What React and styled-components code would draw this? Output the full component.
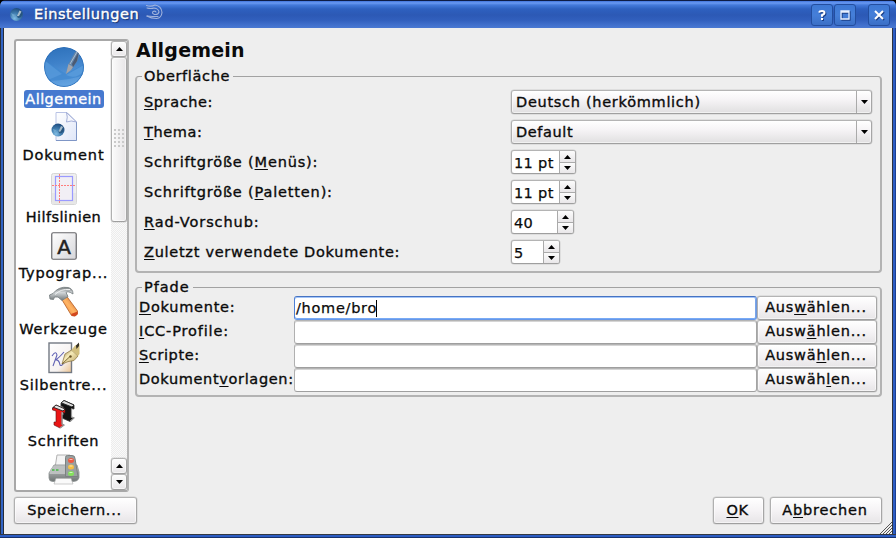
import React from "react";
import styled, { createGlobalStyle, css } from "styled-components";

const Global = createGlobalStyle`
  *, *::before, *::after { box-sizing: border-box; }
  html, body { margin: 0; background: #000; }
  body {
    font-family: "DejaVu Sans", sans-serif;
    font-size: 14.5px;
    line-height: 18px;
    color: #0a0a0a;
    overflow: hidden;
  }
`;

const bevel = css`
  border: 1px solid #a9a9a9;
  border-color: #b4b4b4 #a6a6a6 #9f9f9f #b0b0b0;
  border-radius: 3px;
  box-shadow: inset 0 0 0 1px rgba(255, 255, 255, 0.55), 0 0 0 0.5px rgba(160, 160, 160, 0.4);
`;

const inkWeight = css`
  -webkit-text-stroke: 0.35px currentColor;
`;

const Window = styled.div`
  width: 896px;
  height: 538px;
  display: flex;
  flex-direction: column;
  background: linear-gradient(90deg, #2b2f38 0 1px, #3164c4 1px 3px, #252b38 3px 4px, #2b3038 4px 892px, #30343c 892px 893px, #2c5dc4 893px 895px, #1c3f93 895px);
  border-radius: 6px 6px 0 0;
  overflow: hidden;
`;

const TitleBar = styled.header`
  height: 28px;
  flex: none;
  display: flex;
  align-items: center;
  padding: 1px 6px 0 10px;
  background: linear-gradient(#0d1c45 0 1px, #4074dc 1px, #6a9af2 3px, #447adb 5px, #2e60bf 9px, #2c59b5 15px, #315fbd 20px, #4473cf 26px, #4a78d2 28px);
`;

const Title = styled.h1`
  margin: 0 7px 0 11px;
  padding-bottom: 1px;
  font-size: 14.5px;
  line-height: 20px;
  font-weight: 400;
  color: #fff;
  letter-spacing: 0.53px;
  -webkit-text-stroke: 0.4px #fff;
  text-shadow: 1px 1px 1px #10295f;
`;

const WindowButtons = styled.div`
  display: flex;
  gap: 1px;
  margin-left: auto;
`;

const WindowButton = styled.button`
  width: 22px;
  height: 22px;
  padding: 0;
  margin-left: ${(p) => (p.$apart ? "11px" : 0)};
  display: grid;
  place-items: center;
  border: 1px solid #234e9f;
  border-radius: 3px;
  background: linear-gradient(#3e79d5, #457fd9 50%, #3b6fc6);
  svg { filter: drop-shadow(1px 1px 0 #1b3f86); }
`;

const Body = styled.main`
  width: 888px;
  height: 506px;
  margin-left: 4px;
  padding: 11px 10px 0;
  background: #eeeeee;
  position: relative;
`;

const BottomEdge = styled.div`
  height: 4px;
  background: linear-gradient(#333842 0 1px, #2b5cc2 1px 3px, #17316d 3px);
`;

const Columns = styled.div`
  display: flex;
  gap: 6px;
  height: 453px;
`;

const ListFrame = styled.div`
  width: 115px;
  display: flex;
  border: 2px solid #a8a8a8;
  border-right-color: #b4b4b4;
  border-radius: 3px;
  background: #fff;
`;

const IconList = styled.ul`
  list-style: none;
  margin: 0;
  padding: 4px 0 0;
  width: 95px;
  height: 449px;
  overflow: hidden;
`;

const Item = styled.li`
  height: ${(p) => p.$h}px;
  display: flex;
  flex-direction: column;
  align-items: center;
  justify-content: space-between;
`;

const IconSlot = styled.div`
  height: ${(p) => p.$h}px;
  margin-top: ${(p) => p.$top}px;
  svg { display: block; }
`;

const ItemLabel = styled.span`
  height: 18px;
  line-height: 18px;
  white-space: nowrap;
  letter-spacing: ${(p) => p.$track}px;
  border-radius: 3px;
  ${inkWeight}
  ${(p) =>
    p.$selected &&
    css`
      width: 80px;
      text-align: center;
      color: #fff;
      background: #4679cf;
    `}
`;

const ScrollBar = styled.div`
  width: 16px;
  display: flex;
  flex-direction: column;
  background: repeating-conic-gradient(#ececec 0 25%, #fafafa 0 50%) 0 0 / 2px 2px;
`;

const ScrollButton = styled.button`
  ${bevel}
  width: 16px;
  height: 16px;
  padding: 0;
  display: grid;
  place-items: center;
  flex: none;
  background: linear-gradient(#fdfdfd, #e9e7e9);
  svg { display: block; }
`;

const Thumb = styled.div`
  ${bevel}
  height: 165px;
  margin-bottom: auto;
  display: grid;
  place-items: center;
  background: linear-gradient(90deg, #fbfbfb, #e8e6e8);
`;

const Grip = styled.div`
  width: 11px;
  height: 18px;
  margin-top: -4px;
  background: radial-gradient(circle at 1px 1px, #cacaca 1px, transparent 1.2px) 0 0 / 4px 4px;
`;

const Panel = styled.section`
  width: 747px;
`;

const Heading = styled.h2`
  margin: 0;
  height: 37px;
  font-size: 19px;
  line-height: 22px;
  letter-spacing: 0.2px;
  padding-left: 1px;
`;

const Group = styled.fieldset`
  margin: 0 0 ${(p) => p.$after}px;
  height: ${(p) => p.$h}px;
  min-width: 0;
  padding: 0 ${(p) => p.$pad}px;
  border: 2px solid #b3b3b3;
  border-color: #a2a2a2 #b3b3b3 #b3b3b3 #b3b3b3;
  border-width: 1px 2px 2px;
  border-radius: 4px;
`;

const Legend = styled.legend`
  height: 1px;
  line-height: 1px;
  margin-left: ${(p) => p.$x}px;
  padding: 0 3px 0 2px;
  letter-spacing: ${(p) => p.$track}px;
  ${inkWeight}
`;

const FieldRows = styled.div`
  padding-top: ${(p) => p.$top}px;
  display: flex;
  flex-direction: column;
  gap: ${(p) => p.$gap}px;
`;

const FieldRow = styled.div`
  display: grid;
  grid-template-columns: ${(p) => p.$cols};
  height: 24px;
  align-items: center;
`;

const Label = styled.label`
  white-space: nowrap;
  padding-bottom: ${(p) => p.$lift || 0}px;
  letter-spacing: ${(p) => p.$track}px;
  ${inkWeight}
`;

const Key = styled.span`
  text-decoration: underline;
  text-decoration-thickness: 1px;
  text-underline-offset: 2px;
  text-decoration-skip-ink: none;
`;

const Select = styled.div`
  ${bevel}
  height: 24px;
  width: 361px;
  display: flex;
  align-items: center;
  padding-left: 4px;
  background: linear-gradient(#ffffff, #f6f4f6 40%, #e0dfe0);
  letter-spacing: ${(p) => p.$track}px;
  ${inkWeight}
`;

const SelectArrow = styled.span`
  margin-left: auto;
  width: 15px;
  height: 22px;
  display: grid;
  place-items: center;
  border-left: 1px solid #aaa;
`;

const Spin = styled.div`
  ${bevel}
  width: ${(p) => p.$w}px;
  height: 24px;
  display: flex;
  background: #fff;
  overflow: hidden;
`;

const SpinValue = styled.span`
  flex: 1;
  padding-left: 2px;
  line-height: 24px;
  white-space: nowrap;
  letter-spacing: ${(p) => p.$track}px;
  -webkit-text-stroke: 0.25px currentColor;
`;

const SpinButtons = styled.div`
  width: 16px;
  flex: none;
  display: grid;
  grid-template-rows: 11px 11px;
  border-left: 1px solid #aaa;
`;

const SpinButton = styled.span`
  display: grid;
  place-items: center;
  background: linear-gradient(#fcfcfc, #e9e7e9);
  & + & { border-top: 1px solid #aaa; }
`;

const PathInput = styled.div`
  ${bevel}
  height: 24px;
  width: 463px;
  display: flex;
  align-items: center;
  padding-left: 1px;
  background: #fff;
  box-shadow: inset 0 1px 0 #d5d5d5;
  letter-spacing: 0.72px;
  -webkit-text-stroke: 0.25px currentColor;
  ${(p) =>
    p.$focused &&
    css`
      border-color: #4673c2 #6697e8 #6697e8 #4e80d5;
      box-shadow: inset 0 1px 0 #a5c6f8, inset 0 -1px 0 #78aaf5, inset -1px 0 0 #78a5ea;
    `}
`;

const Caret = styled.i`
  width: 1px;
  height: 17px;
  margin-left: -1px;
  background: #000;
`;

const PushButton = styled.button`
  ${bevel}
  height: ${(p) => p.$h}px;
  width: ${(p) => p.$w}px;
  padding: 0 2px ${(p) => p.$lift || 0}px 0;
  font: inherit;
  color: inherit;
  text-align: center;
  background: linear-gradient(#ffffff, #f5f3f5 50%, #e7e5e7);
  letter-spacing: ${(p) => p.$track}px;
  ${inkWeight}
`;

const Actions = styled.footer`
  display: flex;
  gap: 6px;
  padding-top: 5px;
`;

const Spacer = styled.div`
  flex: 1;
`;

const SizeGrip = styled.svg`
  position: absolute;
  right: 0;
  bottom: 0;
`;

const Arrow = ({ up }) => (
  <svg width="7" height="4" viewBox="0 0 7 4">
    <path d={up ? "M0 4 L3.5 0 L7 4Z" : "M0 0 L7 0 L3.5 4Z"} fill="#000" />
  </svg>
);

const Globe = ({ id, size }) => (
  <svg width={size} height={size} viewBox="0 0 40 40">
    <defs>
      <linearGradient id={`${id}g`} x1="0" y1="0" x2="0.15" y2="1">
        <stop offset="0" stopColor="#2c70ba" />
        <stop offset="0.45" stopColor="#3f82ca" />
        <stop offset="1" stopColor="#62a2e0" />
      </linearGradient>
      <clipPath id={`${id}c`}><circle cx="20" cy="20" r="20" /></clipPath>
    </defs>
    <g clipPath={`url(#${id}c)`}>
      <circle cx="20" cy="20" r="20" fill={`url(#${id}g)`} />
      <path d="M0 13 L22 27 L40 17 V28 Q28 33 4 34Z" fill="#4188cf" opacity=".8" />
      <path d="M0 13 L18 27 L4 33 Q0 26 0 13Z" fill="#5e9fde" opacity=".6" />
      <path d="M22 28 L40 18 V24 Q32 33 22 28Z" fill="#68a8e4" opacity=".5" />
      <circle cx="20" cy="20" r="19.500" fill="none" stroke="#2b6cb5" opacity=".7" />
      <path d="M22 27 L24.500 17 L31 5 L36 3 L34 13 L28 22Z" fill="#6485a9" />
      <path d="M22 27 L24.500 17 L29 20 L27 23Z" fill="#a3a5ab" />
      <path d="M28 17 L35 4 L33 14 L29 20Z" fill="#4b5a72" />
      <path d="M26 17 L33 5" stroke="#a9bdd0" strokeWidth="1" />
    </g>
  </svg>
);

const SmallGlobe = ({ x = 0, y = 0, id }) => (
  <g transform={`translate(${x} ${y})`}>
    <defs>
      <radialGradient id={id} cx=".35" cy=".8" r=".8">
        <stop offset="0" stopColor="#82bde4" />
        <stop offset=".5" stopColor="#3f7cae" />
        <stop offset="1" stopColor="#1f4d80" />
      </radialGradient>
    </defs>
    <circle cx="6.5" cy="6.5" r="6.5" fill={`url(#${id})`} />
    <path d="M6 7 L8 8.500 L12 4 V7 Q11 10 8 10Z" fill="#245078" opacity=".8" />
    <path d="M7 8 L9.500 2.500 L11.500 3.500 L9 8Z" fill="#a9bcc8" />
    <path d="M1 5 L5 7 L3 9Z" fill="#80b6d9" opacity=".6" />
  </g>
);

const DocumentIcon = () => (
  <svg width="32" height="32" viewBox="0 0 32 32">
    <defs>
      <linearGradient id="sheet" x1="0" y1="0" x2="1" y2="1">
        <stop offset="0" stopColor="#fff" /><stop offset="1" stopColor="#dfe6f8" />
      </linearGradient>
    </defs>
    <path d="M8 1.500 H19 L28.500 11 V29.500 H8Z" fill="url(#sheet)" stroke="#b9c3e5" />
    <path d="M8 29.500 H28.500 V11" fill="none" stroke="#7f96c6" />
    <path d="M18.500 1.500 Q20 6 18.500 11 Q23 9 28.500 11Z" fill="#f5f6fc" stroke="#9aa6d2" strokeWidth=".9" />
    <SmallGlobe x={3.500} y={12.500} id="docglobe" />
  </svg>
);

const GuidesIcon = () => (
  <svg width="26" height="32" viewBox="0 0 26 32">
    <rect x=".5" y=".5" width="25" height="31" rx="2" fill="#efefef" stroke="#d6d6d6" />
    <rect x="1" y="20" width="24" height="11" fill="#e7e7e7" />
    <rect x="4.500" y="3.500" width="17" height="24" fill="#f1eff5" stroke="#9a9aff" strokeWidth="1.200" />
    <path d="M8.500 1 V31 M1 12.500 H25" stroke="#ff7d7d" strokeDasharray="2 1" />
  </svg>
);

const TypographyIcon = () => (
  <svg width="26" height="28" viewBox="0 0 26 28">
    <defs>
      <linearGradient id="keycap" x1="0" y1="0" x2="1" y2="1">
        <stop offset="0" stopColor="#fff" /><stop offset="1" stopColor="#d6d6da" />
      </linearGradient>
    </defs>
    <rect x=".75" y=".75" width="24.500" height="26.500" rx="1.500" fill="url(#keycap)" stroke="#66666a" strokeWidth="1.200" />
    <text x="13" y="21.500" textAnchor="middle" fontFamily="DejaVu Sans" fontSize="20" letterSpacing="0" fill="#222" stroke="#222" strokeWidth=".5">A</text>
  </svg>
);

const HammerIcon = () => (
  <svg width="32" height="32" viewBox="0 0 32 32">
    <defs>
      <linearGradient id="handle" x1="1" y1="0" x2="0" y2="1">
        <stop offset="0" stopColor="#c2561c" /><stop offset=".5" stopColor="#ffb565" /><stop offset="1" stopColor="#e8762c" />
      </linearGradient>
      <linearGradient id="steel" x1="0" y1="0" x2="0" y2="1">
        <stop offset="0" stopColor="#777d80" /><stop offset=".4" stopColor="#d2d6d8" /><stop offset="1" stopColor="#70777a" />
      </linearGradient>
    </defs>
    <path d="M13.500 13 L18.500 10 L29.500 25 L29.500 28 L27 30 L23.500 29.500Z" fill="url(#handle)" stroke="#b25a22" strokeWidth=".8" />
    <path d="M23 28 L29.500 25.500 L29.500 28.500 L27 30.200 L24 30Z" fill="#d4481e" />
    <path d="M2 13 L1.500 9 L5 7.500 Q11 0 20 1.500 Q25 2.500 25 8 Q20 4.500 18 6.500 L20 10.500 L14 14.500 L10 11 L6.500 11 L5.500 13.500Z" fill="url(#steel)" stroke="#7b8285" strokeWidth=".9" />
    <path d="M7 8.500 Q13 2.500 22 3.500" fill="none" stroke="#eef0f1" />
  </svg>
);

const HyphenIcon = () => (
  <svg width="32" height="32" viewBox="0 0 32 32">
    <defs>
      <linearGradient id="card" x1="0" y1="0" x2="1" y2="1">
        <stop offset="0" stopColor="#fff" /><stop offset=".65" stopColor="#f6f2f1" /><stop offset="1" stopColor="#ecc28c" />
      </linearGradient>
      <linearGradient id="nib" x1="0" y1="0" x2="1" y2="1">
        <stop offset="0" stopColor="#8d7742" /><stop offset=".4" stopColor="#f6ebb9" /><stop offset="1" stopColor="#b69d5c" />
      </linearGradient>
    </defs>
    <rect x="1" y="1" width="22.500" height="29.500" fill="url(#card)" stroke="#737983" strokeWidth="1.400" />
    <path d="M4 14 Q8 8 9 13 L5 24 M16 10 Q10 17 7 18 Q11 17 12 23 Q13 25 17 20" fill="none" stroke="#6263b4" strokeWidth="1.100" />
    <path d="M14 22 L17 12 L23.500 8 L30 14 L26 18.500 Q20 19 14 22Z" fill="url(#nib)" stroke="#8f7a46" strokeWidth=".8" />
    <path d="M23.500 8 L27 3.500 L31.500 2 V12 L30 14Z" fill="#d2bf7e" />
    <path d="M28 3.500 L31 .5 V4 L28.500 7Z" fill="#342f22" />
    <path d="M14 22 L22 14.500" stroke="#7e6935" />
    <circle cx="22.500" cy="14.500" r="1.200" fill="#675224" />
  </svg>
);

const FontsIcon = () => (
  <svg width="26" height="30" viewBox="0 0 26 30">
    <path d="M10 4 L13 1.500 L23 6 V10 L20.500 9.500 V18 L23 19 L19 22.500 L11 19 V16 L12.500 16 V8 L10 7Z" fill="#111" stroke="#333" strokeWidth=".8" />
    <path d="M10 4 L13 1.500 L23 6 L21 8 L12 4.500Z" fill="#dcdcdc" stroke="#222" strokeWidth=".9" />
    <path d="M20.500 9.500 V18 L23 19 L19 22.500" fill="none" stroke="#999" strokeWidth="1.200" />
    <path d="M1.500 9 L5 6 L14 10 V14 L11 13 V25 L13 26 L9 29 L3 26 V23 L5 23 V12 L1.500 11Z" fill="#ea1515" stroke="#5c1010" strokeWidth=".6" />
    <path d="M1.500 9 L5 6 L14 10 L12 12 L3 8.500Z" fill="#e6e6e6" stroke="#222" strokeWidth=".9" />
    <path d="M11 13 V25 L13 26 L9 29" fill="none" stroke="#999" strokeWidth="1.300" />
  </svg>
);

const PrinterIcon = () => (
  <svg width="32" height="31" viewBox="0 0 32 31">
    <defs>
      <linearGradient id="printer" x1="0" y1="0" x2="0" y2="1">
        <stop offset="0" stopColor="#cfd1d1" /><stop offset=".5" stopColor="#9b9f9f" /><stop offset="1" stopColor="#6e7474" />
      </linearGradient>
    </defs>
    <path d="M9 1 H22 V14 H7Z" fill="#f4f4f4" stroke="#b2b2b2" />
    <path d="M6 11 H29 L31 18 V24 Q30 27.500 25 27.500 H5 Q1 27.500 1 24 L1 19Z" fill="url(#printer)" stroke="#8c9090" strokeWidth=".8" />
    <path d="M1.500 20 Q2 13 7 12 H17 V20Z" fill="#bdc0c0" />
    <path d="M8 24.500 H23 L25 30 H6Z" fill="#fafafa" stroke="#b8b8b8" strokeWidth=".7" />
    <path d="M4 16 H6.500 M8 16 H10.500" stroke="#42b942" strokeWidth="1.500" />
    <path d="M17.500 3.500 Q17.500 1.500 19.500 1.500 H24 Q27 1.500 27 4.500 L30 22.500 H17.500Z" fill="#9aa0a0" stroke="#7b8181" />
    <ellipse cx="23" cy="6.500" rx="3" ry="2.500" fill="#f0593f" />
    <ellipse cx="23" cy="13" rx="3" ry="2.500" fill="#f5bf40" />
    <ellipse cx="23" cy="19.500" rx="3" ry="2.500" fill="#84e25c" />
    <path d="M21.500 5.500 H24.500 M21.500 12 H24.500 M21.500 18.500 H24.500" stroke="#fff" strokeOpacity=".6" />
  </svg>
);

const Swirl = styled.svg`
  margin-bottom: 5px;
`;

const TitleSwirl = () => (
  <Swirl width="18" height="17" viewBox="0 0 18 17" fill="none" stroke="#9fb2dc" strokeWidth="1.100" strokeLinecap="round">
    <path d="M.5 1.500 Q5 3 9 1 Q15.500 2 16 8.500 Q15.500 14 10.500 14.500 Q5 14.500 1 12" />
    <path d="M1 4 Q5 5 8 4 Q12.500 4.500 13 8 Q12 11 8.500 10.500 Q5.500 9.500 7 7.500 Q9 6.500 10 8" />
    <path d="M1 12 Q7 12.500 12 12.500" />
  </Swirl>
);

const items = [
  { name: "Allgemein", h: 63, icon: <Globe id="big" size={40} />, ih: 40, top: 2, track: 0.45, selected: true },
  { name: "Dokument", h: 56, icon: <DocumentIcon />, ih: 32, top: 3, track: 0.85 },
  { name: "Hilfslinien", h: 62, icon: <GuidesIcon />, ih: 32, top: 9, track: 0.4 },
  { name: "Typograp...", h: 56, icon: <TypographyIcon />, ih: 28, top: 6, track: 0.85 },
  { name: "Werkzeuge", h: 56, icon: <HammerIcon />, ih: 32, top: 4, track: 0.9 },
  { name: "Silbentre...", h: 56, icon: <HyphenIcon />, ih: 32, top: 4, track: 0.75 },
  { name: "Schriften", h: 56, icon: <FontsIcon />, ih: 30, top: 5, track: 0.7 },
  { name: "", h: 56, icon: <PrinterIcon />, ih: 31, top: 4, track: 0.3 },
];

/* Renders a caption whose accelerator key follows an ampersand. */
const Caption = ({ text }) => {
  const i = text.indexOf("&");
  if (i < 0) return text;
  return (
    <>
      {text.slice(0, i)}
      <Key>{text[i + 1]}</Key>
      {text.slice(i + 2)}
    </>
  );
};

const selects = [
  { label: "&Sprache:", value: "Deutsch (herkömmlich)", track: 0.6, vt: 0.71 },
  { label: "&Thema:", value: "Default", track: 0.6, vt: 0.6 },
];

const spins = [
  { label: "Schriftgröße (&Menüs):", value: "11 pt", w: 65, track: 0.83, vt: 0.35 },
  { label: "Schriftgröße (&Paletten):", value: "11 pt", w: 65, track: 0.83, vt: 0.35 },
  { label: "&Rad-Vorschub:", value: "40", w: 63, track: 0.9, vt: 0.2 },
  { label: "&Zuletzt verwendete Dokumente:", value: "5", w: 49, track: 0.72, vt: 0.2 },
];

const paths = [
  { label: "&Dokumente:", value: "/home/bro", button: "Aus&wählen...", track: 0.75 },
  { label: "&ICC-Profile:", button: "Ausw&ählen...", track: 0.85 },
  { label: "&Scripte:", button: "Auswä&hlen...", track: 0.6 },
  { label: "Dokument&vorlagen:", button: "Auswäh&len...", track: 0.65 },
];

export default function App() {
  return (
    <>
      <Global />
      <Window>
        <TitleBar>
          <svg width="13" height="13" viewBox="0 0 13 13"><SmallGlobe id="titleglobe" /></svg>
          <Title>Einstellungen</Title>
          <TitleSwirl />
          <WindowButtons>
            <WindowButton aria-label="Hilfe">
              <svg width="8" height="10" viewBox="0 0 8 10" fill="none" stroke="#fff" strokeWidth="2">
                <path d="M1 2.500 Q1.500 1 4 1 Q6.500 1 6.500 3 Q6.500 4.300 4 5.200 V6.800 M4 8 V10" />
              </svg>
            </WindowButton>
            <WindowButton aria-label="Maximieren">
              <svg width="10" height="10" viewBox="0 0 10 10" fill="none" stroke="#e8f0ff" strokeWidth="1.300">
                <path d="M1 1 H9 V9 H1Z M1 2 H9" />
              </svg>
            </WindowButton>
            <WindowButton $apart aria-label="Schließen">
              <svg width="10" height="10" viewBox="0 0 10 10" stroke="#fff" strokeWidth="2">
                <path d="M1 1 L9 9 M9 1 L1 9" />
              </svg>
            </WindowButton>
          </WindowButtons>
        </TitleBar>
        <Body>
          <Columns>
            <ListFrame>
              <IconList>
                {items.map((it) => (
                  <Item key={it.name} $h={it.h}>
                    <IconSlot $h={it.ih} $top={it.top}>{it.icon}</IconSlot>
                    <ItemLabel $selected={it.selected} $track={it.track}>{it.name}</ItemLabel>
                  </Item>
                ))}
              </IconList>
              <ScrollBar>
                <ScrollButton aria-label="Nach oben"><Arrow up /></ScrollButton>
                <Thumb><Grip /></Thumb>
                <ScrollButton aria-label="Nach oben"><Arrow up /></ScrollButton>
                <ScrollButton aria-label="Nach unten"><Arrow /></ScrollButton>
              </ScrollBar>
            </ListFrame>
            <Panel>
              <Heading>Allgemein</Heading>
              <Group $h={197} $pad={7} $after={14}>
                <Legend $x={-2} $track={0.65}>Oberfläche</Legend>
                <FieldRows $top={13} $gap={6}>
                  {selects.map((f) => (
                    <FieldRow key={f.label} $cols="367px auto">
                      <Label $track={f.track}><Caption text={f.label} /></Label>
                      <Select $track={f.vt}>{f.value}<SelectArrow><Arrow /></SelectArrow></Select>
                    </FieldRow>
                  ))}
                  {spins.map((f) => (
                    <FieldRow key={f.label} $cols="367px auto">
                      <Label $track={f.track}><Caption text={f.label} /></Label>
                      <Spin $w={f.w}>
                        <SpinValue $track={f.vt}>{f.value}</SpinValue>
                        <SpinButtons>
                          <SpinButton><Arrow up /></SpinButton>
                          <SpinButton><Arrow /></SpinButton>
                        </SpinButtons>
                      </Spin>
                    </FieldRow>
                  ))}
                </FieldRows>
              </Group>
              <Group $h={110} $pad={2} $after={0}>
                <Legend $x={3} $track={0.95}>Pfade</Legend>
                <FieldRows $top={8} $gap={0}>
                  {paths.map((f) => (
                    <FieldRow key={f.label} $cols="155px 463px auto">
                      <Label $track={f.track} $lift={2}><Caption text={f.label} /></Label>
                      <PathInput $focused={!!f.value}>{f.value}{f.value && <Caret />}</PathInput>
                      <PushButton $w={120} $h={24} $track={0.75} $lift={2}><Caption text={f.button} /></PushButton>
                    </FieldRow>
                  ))}
                </FieldRows>
              </Group>
            </Panel>
          </Columns>
          <Actions>
            <PushButton $w={123} $h={27} $track={0.7} $lift={1}>Speichern...</PushButton>
            <Spacer />
            <PushButton $w={51} $h={27} $track={0.6} $lift={1}><Caption text="&OK" /></PushButton>
            <PushButton $w={112} $h={27} $track={0.8} $lift={1}><Caption text="A&bbrechen" /></PushButton>
          </Actions>
          <SizeGrip width="12" height="12" viewBox="0 0 12 12" stroke="#555" strokeWidth="1">
            <path d="M0 12 L12 0 M3 12 L12 3 M6 12 L12 6 M9 12 L12 9" />
          </SizeGrip>
        </Body>
        <BottomEdge />
      </Window>
    </>
  );
}
